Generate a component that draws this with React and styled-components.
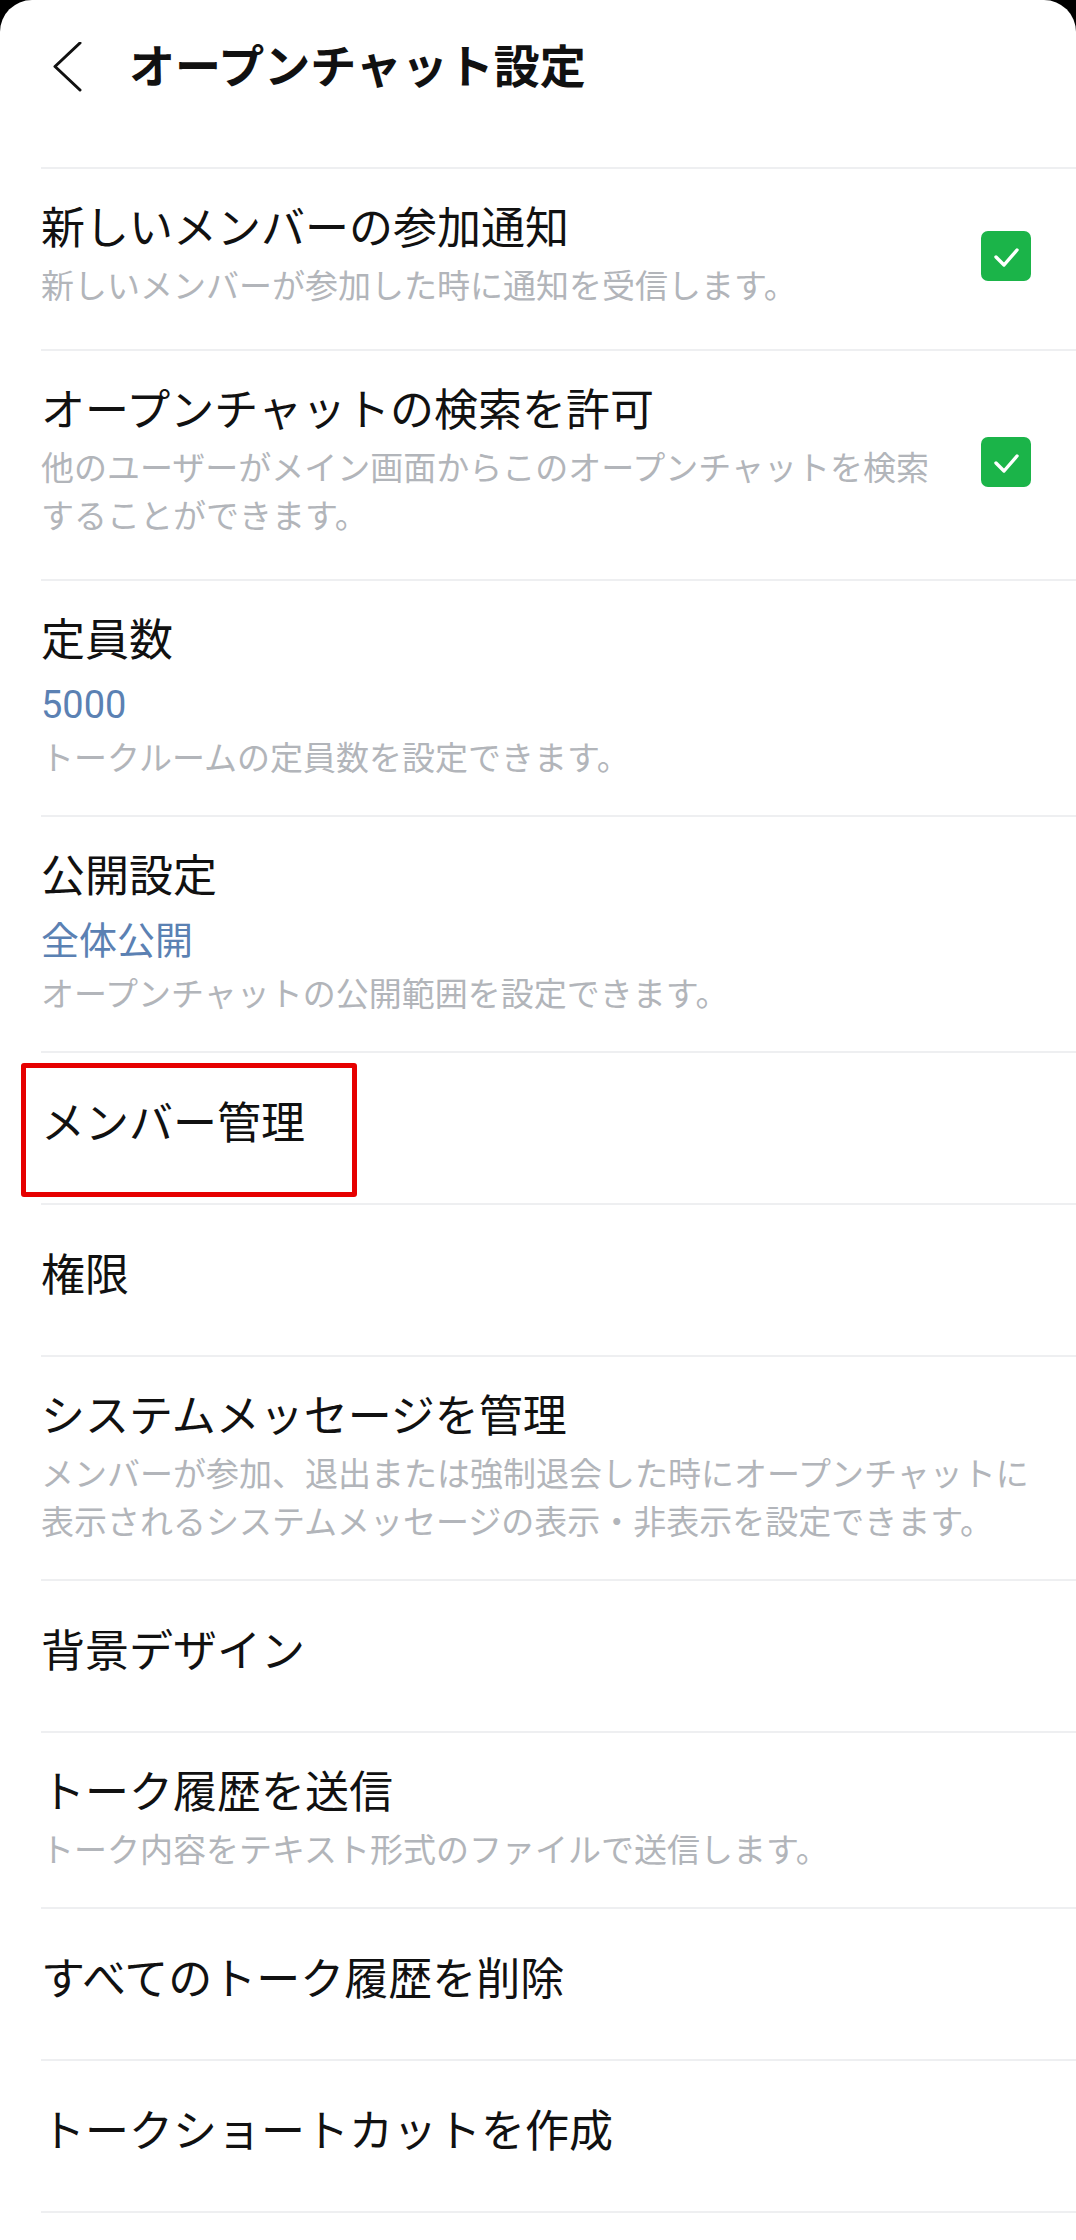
import React from "react";
import styled, { createGlobalStyle } from "styled-components";

const GlobalStyle = createGlobalStyle`
  body {
    margin: 0;
    background: #000;
    font-family: Roboto, "Noto Sans CJK JP", sans-serif;
  }
`;

const Screen = styled.div`
  background: #fff;
  min-height: 2240px;
  border-radius: 32px 32px 0 0;
  overflow: hidden;
`;

const Header = styled.header`
  height: 134px;
  display: flex;
  align-items: center;
  padding-left: 50px;
`;

const BackIcon = styled.svg`
  width: 34px;
  height: 50px;
  flex-shrink: 0;
`;

const PageTitle = styled.h1`
  margin: 0 0 0 45px;
  font-size: 46px;
  font-weight: 700;
  color: #111;
  line-height: 60px;
`;

const List = styled.div`
  margin: 33px 0 0 41px;
  border-bottom: 2px solid #eeeff1;
`;

const Row = styled.div`
  position: relative;
  box-sizing: border-box;
  display: flex;
  align-items: center;
  min-height: 152px;
  border-top: 2px solid #eeeff1;
  padding: ${({ $single, $check }) =>
    $single ? "0 40px 8px 0" : `32px 40px ${$check ? 38 : 32}px 0`};
`;

const Body = styled.div`
  flex: 1;
  min-width: 0;
`;

const ItemTitle = styled.div`
  font-size: 44px;
  line-height: 56px;
  color: #111;
`;

const Value = styled.div`
  font-size: 38px;
  line-height: 50px;
  color: #5b81b3;
  margin: 11px 0 5px;
`;

const Description = styled.div`
  font-size: 33px;
  line-height: 48px;
  color: #b2b5ba;
  margin-top: ${({ $afterValue }) => ($afterValue ? "0" : "6px")};
`;

const CheckBox = styled.div`
  width: 50px;
  height: 50px;
  margin: 0 5px 0 41px;
  border-radius: 7px;
  background: #1bb449;
  display: flex;
  align-items: center;
  justify-content: center;
  flex-shrink: 0;
`;

const Highlight = styled.div`
  position: absolute;
  left: -20px;
  top: 10px;
  width: 336px;
  height: 134px;
  box-sizing: border-box;
  border: 5px solid #e60000;
  border-radius: 3px;
  pointer-events: none;
`;

const rows = [
  {
    title: "新しいメンバーの参加通知",
    desc: "新しいメンバーが参加した時に通知を受信します。",
    checked: true,
  },
  {
    title: "オープンチャットの検索を許可",
    desc: "他のユーザーがメイン画面からこのオープンチャットを検索することができます。",
    checked: true,
  },
  { title: "定員数", value: "5000", desc: "トークルームの定員数を設定できます。" },
  {
    title: "公開設定",
    value: "全体公開",
    desc: "オープンチャットの公開範囲を設定できます。",
  },
  { title: "メンバー管理", highlight: true },
  { title: "権限" },
  {
    title: "システムメッセージを管理",
    desc: "メンバーが参加、退出または強制退会した時にオープンチャットに表示されるシステムメッセージの表示・非表示を設定できます。",
  },
  { title: "背景デザイン" },
  { title: "トーク履歴を送信", desc: "トーク内容をテキスト形式のファイルで送信します。" },
  { title: "すべてのトーク履歴を削除" },
  { title: "トークショートカットを作成" },
];

const Check = () => (
  <svg width="50" height="50" viewBox="0 0 50 50">
    <polyline
      points="15,26 23,34 36,19"
      fill="none"
      stroke="#fff"
      strokeWidth="3.4"
      strokeLinecap="round"
      strokeLinejoin="round"
    />
  </svg>
);

const SettingRow = ({ title, value, desc, checked, highlight }) => (
  <Row $single={!value && !desc} $check={checked}>
    <Body>
      <ItemTitle>{title}</ItemTitle>
      {value && <Value>{value}</Value>}
      {desc && <Description $afterValue={!!value}>{desc}</Description>}
    </Body>
    {checked && (
      <CheckBox>
        <Check />
      </CheckBox>
    )}
    {highlight && <Highlight />}
  </Row>
);

const App = () => (
  <>
    <GlobalStyle />
    <Screen>
      <Header>
        <BackIcon viewBox="0 0 34 50">
          <polyline
            points="30,1 5,24.5 30,48"
            fill="none"
            stroke="#111"
            strokeWidth="3"
            strokeLinecap="round"
            strokeLinejoin="round"
          />
        </BackIcon>
        <PageTitle>オープンチャット設定</PageTitle>
      </Header>
      <List>
        {rows.map((r) => (
          <SettingRow key={r.title} {...r} />
        ))}
      </List>
    </Screen>
  </>
);

export default App;
